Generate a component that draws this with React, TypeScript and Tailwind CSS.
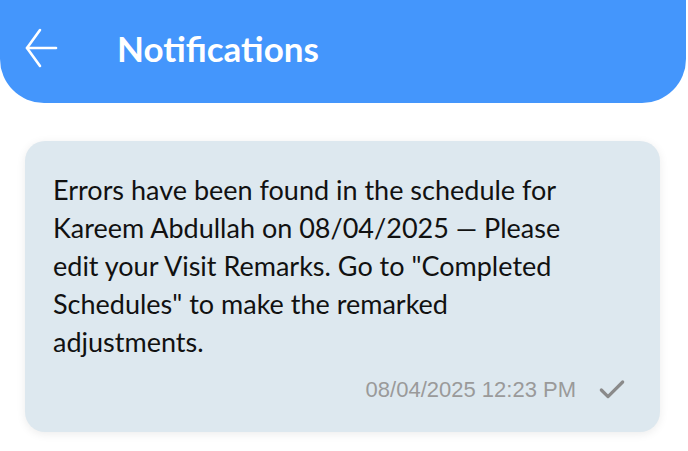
import { Check } from 'lucide-react';

export default function App() {
  return (
    <div className="w-[688px] h-[451px] bg-white overflow-hidden" style={{ fontFamily: 'Lato, "Noto Sans", sans-serif' }}>
      {/* Header */}
      <div className="w-[686px] h-[103px] bg-[#4496FC] rounded-b-[44px] flex items-center pl-[25px] pb-[7px]">
        <svg width="33" height="40" viewBox="0 0 33 40" fill="none" stroke="white" strokeWidth="2.6" strokeLinecap="round" strokeLinejoin="round">
          <path d="M2 20H31" />
          <path d="M15 2L2 20L15 38" />
        </svg>
        <h1 className="ml-[59px] text-[35px] font-bold text-white">Notifications</h1>
      </div>

      {/* Notification card */}
      <div className="mx-[25px] mt-[38px] w-[635px] rounded-[20px] bg-[#DDE8EF] shadow-[0_2px_10px_rgba(0,0,0,0.08)] px-[28px] pt-[30px] pb-[26px]">
        <p className="w-[548px] text-[27px] leading-[38px] text-[#111]">
          Errors have been found in the schedule for Kareem Abdullah on 08/04/2025 — Please edit your Visit
          Remarks. Go to "Completed Schedules" to make the remarked adjustments.
        </p>
        <div className="flex items-center justify-end mt-[12px] pr-[4px]">
          <span className="text-[22px] text-[#9a9a9a]" style={{ fontFamily: '"Liberation Sans", Arial, sans-serif' }}>
            08/04/2025 12:23 PM
          </span>
          <Check className="ml-[20px] w-[32px] h-[32px] text-[#8a8a8a]" strokeWidth={2.4} />
        </div>
      </div>
    </div>
  );
}
